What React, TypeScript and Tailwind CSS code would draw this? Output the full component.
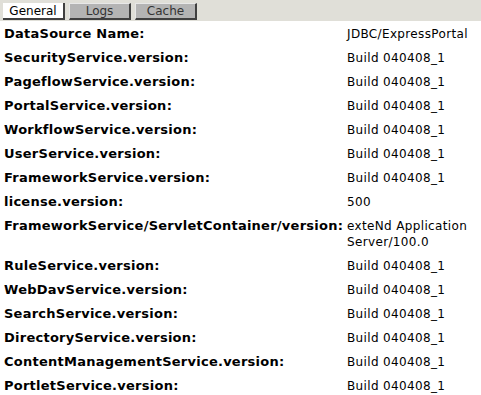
const rows: [string, string][] = [
  ['DataSource Name:', 'JDBC/ExpressPortal'],
  ['SecurityService.version:', 'Build 040408_1'],
  ['PageflowService.version:', 'Build 040408_1'],
  ['PortalService.version:', 'Build 040408_1'],
  ['WorkflowService.version:', 'Build 040408_1'],
  ['UserService.version:', 'Build 040408_1'],
  ['FrameworkService.version:', 'Build 040408_1'],
  ['license.version:', '500'],
  ['FrameworkService/ServletContainer/version:', 'exteNd Application Server/100.0'],
  ['RuleService.version:', 'Build 040408_1'],
  ['WebDavService.version:', 'Build 040408_1'],
  ['SearchService.version:', 'Build 040408_1'],
  ['DirectoryService.version:', 'Build 040408_1'],
  ['ContentManagementService.version:', 'Build 040408_1'],
  ['PortletService.version:', 'Build 040408_1'],
];

const tabs = [
  { name: 'General', active: true },
  { name: 'Logs', active: false },
  { name: 'Cache', active: false },
];

export default function App() {
  return (
    <div className="w-[481px] h-[395px] bg-white overflow-hidden font-['DejaVu_Sans',Verdana,sans-serif] text-black">
      {/* tab strip */}
      <div className="h-[21px] bg-[#e0dfd8] flex items-start pt-[3px] pl-[3px] gap-[4px]">
        {tabs.map(t => (
          <div
            key={t.name}
            className={`w-[62px] h-[17px] flex items-center justify-center text-[12px] leading-none border-r-2 border-b-2 border-r-[#404040] border-b-[#404040] ${
              t.active ? 'bg-white text-black' : 'bg-[#b4b4b4] text-[#333] border-l border-t border-l-[#e8e8e8] border-t-[#e8e8e8]'
            }`}
          >
            {t.name}
          </div>
        ))}
      </div>

      {/* properties */}
      <div className="grid grid-cols-[343px_1fr] pt-[1px]">
        {rows.map(([label, value]) => (
          <div key={label} className="contents">
            <div className="pl-[4px] py-[4px] text-[13px] leading-[16px] font-bold tracking-[0.25px]">{label}</div>
            <div className="pl-[4px] pr-[4px] py-[4px] text-[12px] leading-[16px] tracking-[0.35px]">{value}</div>
          </div>
        ))}
      </div>
    </div>
  );
}
